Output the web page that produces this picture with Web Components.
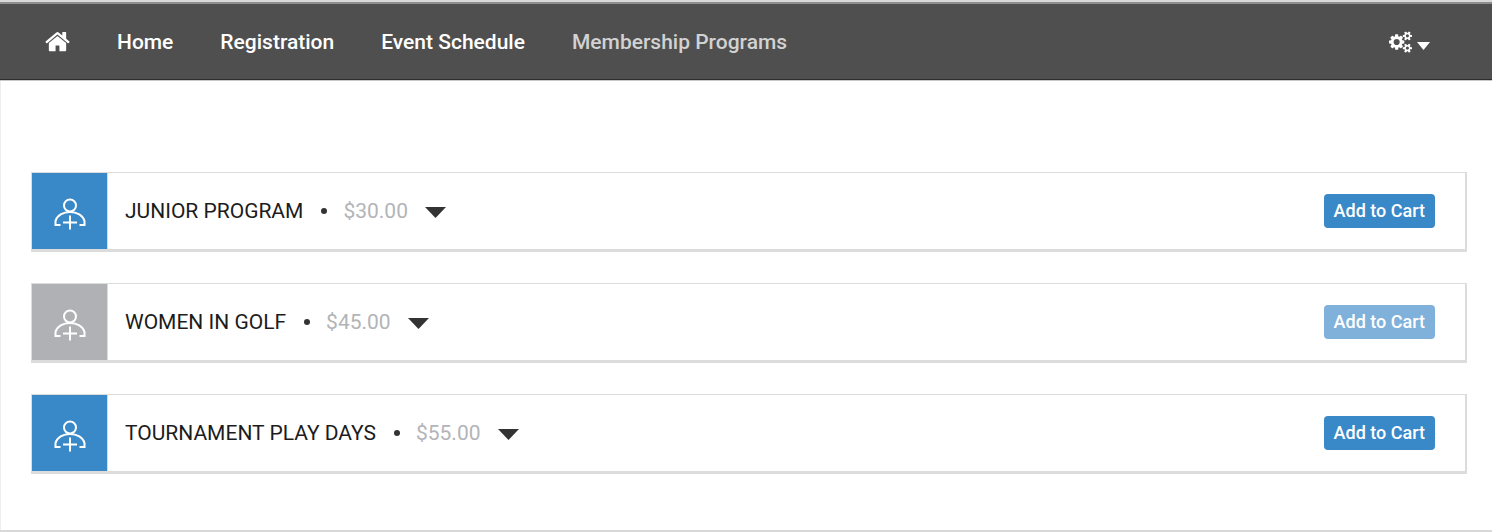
<!DOCTYPE html>
<html lang="en">
<head>
<meta charset="utf-8">
<meta name="viewport" content="width=device-width, initial-scale=1">
<title>Membership Programs</title>
<style>
  body { margin: 0; background: #fff; font-family: Roboto, "Liberation Sans", sans-serif; font-size: 21px; color: #1c1c1c; }
</style>
</head>
<body>
<app-shell>
  <site-nav slot="nav">
    <nav-link href="#icon" label="Start page"><home-icon></home-icon></nav-link>
    <nav-link href="#home">Home</nav-link>
    <nav-link href="#registration">Registration</nav-link>
    <nav-link href="#schedule">Event Schedule</nav-link>
    <nav-link href="#programs" current>Membership Programs</nav-link>
    <settings-menu slot="end"></settings-menu>
  </site-nav>
  <program-card price="$30.00">JUNIOR PROGRAM</program-card>
  <program-card price="$45.00" unavailable>WOMEN IN GOLF</program-card>
  <program-card price="$55.00">TOURNAMENT PLAY DAYS</program-card>
</app-shell>
<script>
const define = (name, html, setup) => {
  const template = document.createElement('template');
  template.innerHTML = html;
  customElements.define(name, class extends HTMLElement {
    constructor() {
      super();
      this.attachShadow({ mode: 'open' }).append(template.content.cloneNode(true));
    }
    connectedCallback() { if (setup) setup(this, this.shadowRoot); }
  });
};

define('app-shell', `
<style>
  :host { display: flex; flex-direction: column; min-height: 100vh; box-sizing: border-box; border-bottom: 2px solid #d8d8d8; }
  main { flex: 1; display: flex; flex-direction: column; gap: 31px; padding: 91px 25px 32px 30px; border-left: 1px solid #eee; }
</style>
<slot name="nav"></slot>
<main><slot></slot></main>`);

define('site-nav', `
<style>
  :host { display: block; border-top: 2px solid #d8d8d8; border-bottom: 1px solid #c8c8c8; }
  nav { display: flex; align-items: center; justify-content: space-between; height: 75px; padding: 0 62px 0 45px; background: #4f4f4f; border-top: 2px solid #8e8e8e; border-bottom: 1px solid #2c2c2c; }
  div { display: flex; align-items: center; gap: 47px; }
</style>
<nav><div><slot></slot></div><slot name="end"></slot></nav>`);

define('nav-link', `
<style>
  :host { display: block; }
  a { display: flex; color: #fff; text-decoration: none; font-weight: 500; line-height: 28px; white-space: nowrap; }
  :host([current]) a { color: #d2d2d2; }
</style>
<a><slot></slot></a>`, (el, root) => {
  const a = root.querySelector('a');
  a.href = el.getAttribute('href');
  if (el.hasAttribute('label')) a.setAttribute('aria-label', el.getAttribute('label'));
  if (el.hasAttribute('current')) a.setAttribute('aria-current', 'page');
});

define('home-icon', `
<style>:host, svg { display: block; }</style>
<svg width="25" height="24" viewBox="64 150 1664 1536" fill="#fff" aria-hidden="true"><path d="M1472 992v480q0 26-19 45t-45 19h-384v-384h-256v384h-384q-26 0-45-19t-19-45v-480q0-1 .5-3t.5-3l575-474 575 474q1 2 1 6zm223-69l-62 74q-8 9-21 11h-3q-13 0-21-7l-692-577-692 577q-12 8-24 7-13-2-21-11l-62-74q-8-10-7-23.500t11-21.500l719-599q32-26 76-26t76 26l244 204v-195q0-14 9-23t23-9h192q14 0 23 9t9 23v408l219 182q10 8 11 21.500t-7 23.500z"/></svg>`);

define('settings-menu', `
<style>
  :host { display: block; }
  button { display: flex; align-items: center; gap: 5px; padding: 0; border: 0; background: none; cursor: pointer; }
  .caret { padding-top: 9px; }
</style>
<button type="button" aria-label="Settings" aria-haspopup="true">
  <svg width="23" height="22" viewBox="-64 0 1920 1792" fill="#fff" aria-hidden="true"><path d="M832 896q0-106-75-181t-181-75-181 75-75 181 75 181 181 75 181-75 75-181zm768 512q0-52-38-90t-90-38-90 38-38 90q0 53 37.500 90.500t90.500 37.500 90.500-37.500 37.500-90.500zm0-1024q0-52-38-90t-90-38-90 38-38 90q0 53 37.500 90.500t90.500 37.500 90.500-37.500 37.500-90.500zm-384 421v185q0 10-7 19.500t-16 10.500l-155 24q-11 35-32 76 34 48 90 115 7 11 7 20 0 12-7 19-23 30-82.500 89.500t-78.500 59.500q-11 0-21-7l-115-90q-37 19-77 31-11 108-23 155-7 24-30 24h-186q-11 0-20-7.500t-10-17.500l-23-153q-34-10-75-31l-118 89q-7 7-20 7-11 0-21-8-144-133-144-160 0-9 7-19 10-14 41-53t47-61q-23-44-35-82l-152-24q-10-1-17-9.500t-7-19.500v-185q0-10 7-19.500t16-10.500l155-24q11-35 32-76-34-48-90-115-7-11-7-20 0-12 7-20 22-30 82-89t79-59q11 0 21 7l115 90q34-18 77-32 11-108 23-154 7-24 30-24h186q11 0 20 7.500t10 17.500l23 153q34 10 75 31l118-89q8-7 20-7 11 0 21 8 144 133 144 160 0 8-7 19-12 16-42 54t-45 60q23 48 34 82l152 23q10 2 17 10.500t7 19.500zm640 533v140q0 16-149 31-12 27-30 52 51 113 51 138 0 4-4 7-122 71-124 71-8 0-46-47t-52-68q-20 2-30 2t-30-2q-14 21-52 68t-46 47q-2 0-124-71-4-3-4-7 0-25 51-138-18-25-30-52-149-15-149-31v-140q0-16 149-31 13-29 30-52-51-113-51-138 0-4 4-7 4-2 35-20t59-34 30-16q8 0 46 46.500t52 67.500q20-2 30-2t30 2q51-71 92-112l6-2q4 0 124 70 4 3 4 7 0 25-51 138 17 23 30 52 149 15 149 31zm0-1024v140q0 16-149 31-12 27-30 52 51 113 51 138 0 4-4 7-122 71-124 71-8 0-46-47t-52-68q-20 2-30 2t-30-2q-14 21-52 68t-46 47q-2 0-124-71-4-3-4-7 0-25 51-138-18-25-30-52-149-15-149-31v-140q0-16 149-31 13-29 30-52-51-113-51-138 0-4 4-7 4-2 35-20t59-34 30-16q8 0 46 46.500t52 67.500q20-2 30-2t30 2q51-71 92-112l6-2q4 0 124 70 4 3 4 7 0 25-51 138 17 23 30 52 149 15 149 31z"/></svg>
  <svg class="caret" width="13" height="8" viewBox="0 0 13 8" fill="#fff" aria-hidden="true"><path d="M0 0h13L6.500 8z"/></svg>
</button>`);

define('program-card', `
<style>
  :host { display: block; --accent: #3988c7; --action: #3988c7; }
  :host([unavailable]) { --accent: #b0b1b5; --action: #7fb1da; }
  article { display: flex; height: 76px; border: solid #dcdcdc; border-width: 1px 2px 3px 1px; }
  .tile { display: flex; align-items: center; justify-content: center; width: 76px; padding-top: 6px; box-sizing: border-box; background: var(--accent); border-right: 1px solid #dcdcdc; flex: none; }
  .body { flex: 1; display: flex; align-items: center; padding: 0 30px 0 17px; }
  h2 { margin: 0; font-size: 21px; font-weight: 400; line-height: 28px; white-space: nowrap; }
  .dot { width: 6px; height: 6px; border-radius: 50%; background: #333; margin: 0 16px 0 18px; }
  .price { color: #b3b4b8; line-height: 28px; }
  .toggle { display: flex; margin: 2px auto 0 17px; padding: 0; border: 0; background: none; cursor: pointer; }
  .add { height: 34px; padding: 0 10px; border: 0; border-radius: 4px; background: var(--action); color: #fff; font: 500 18px/34px Roboto, "Liberation Sans", sans-serif; white-space: nowrap; cursor: pointer; }
</style>
<article>
  <div class="tile"><svg width="32" height="32" viewBox="0 0 32 32" fill="none" stroke="#fff" stroke-width="2" aria-hidden="true"><circle cx="16" cy="7.500" r="6"/><path d="M6.500 27H1.500V23C3 17.500 9 14 16 14s13 3.500 14.500 9v4h-5M16 17.500v14M9 24.500h14"/></svg></div>
  <div class="body">
    <h2><slot></slot></h2>
    <span class="dot"></span>
    <span class="price"></span>
    <button class="toggle" type="button" aria-label="Show details"><svg width="21" height="11" viewBox="0 0 21 11" fill="#333" aria-hidden="true"><path d="M0 0h21L10.500 11z"/></svg></button>
    <button class="add" type="button">Add to Cart</button>
  </div>
</article>`, (el, root) => {
  root.querySelector('.price').textContent = el.getAttribute('price');
  root.querySelector('.add').disabled = el.hasAttribute('unavailable');
});
</script>
</body>
</html>
